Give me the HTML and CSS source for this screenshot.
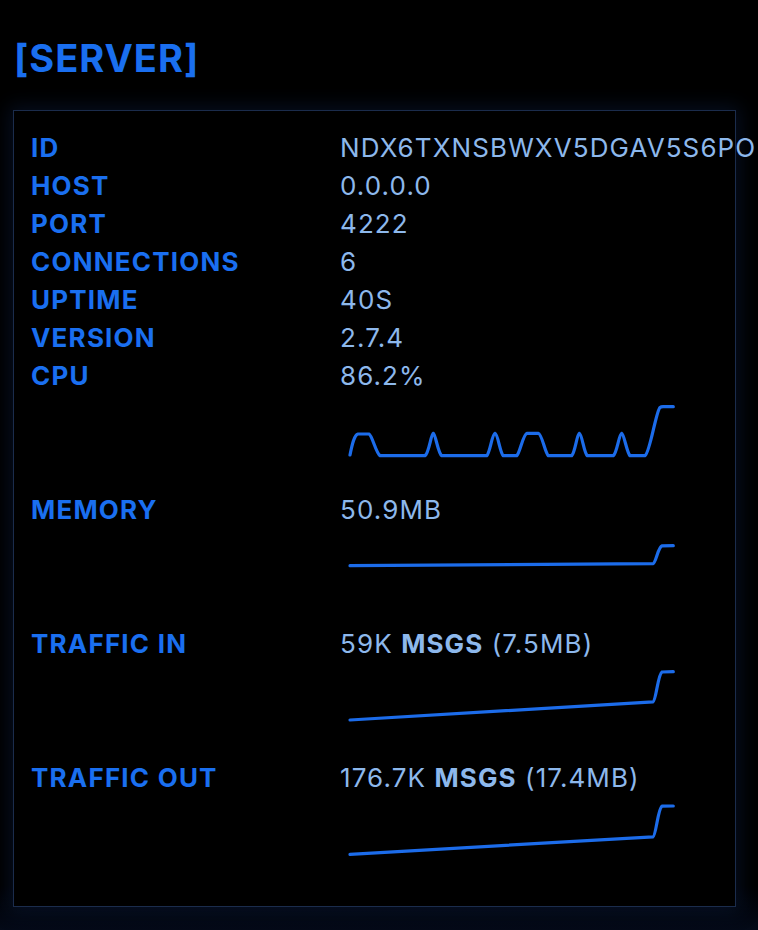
FILE: index.html
```html
<!DOCTYPE html>
<html>
<head>
<meta charset="utf-8">
<link rel="stylesheet" href="styles.css">
</head>
<body>
<div class="page">
  <h1 class="title">[SERVER]</h1>
  <section class="panel">
    <div class="row"><span class="label">ID</span><span class="value">NDX6TXNSBWXV5DGAV5S6PO</span></div>
    <div class="row"><span class="label">HOST</span><span class="value">0.0.0.0</span></div>
    <div class="row"><span class="label">PORT</span><span class="value">4222</span></div>
    <div class="row"><span class="label">CONNECTIONS</span><span class="value">6</span></div>
    <div class="row"><span class="label">UPTIME</span><span class="value">40S</span></div>
    <div class="row"><span class="label">VERSION</span><span class="value">2.7.4</span></div>
    <div class="row"><span class="label">CPU</span><span class="value">86.2%</span></div>
    <div class="chart">
      <svg width="340" height="96" viewBox="0 0 340 96">
        <path class="spark" d="M10 60 C12 50 14 40 18 39 L29 39 C32 40 36 58 40 60.7 L85 60.7 C89 58 91 39 93.3 38.3 C95.5 39 98 58 101.7 60.7 L146.7 60.7 C150 58 152 39 155 38.3 C158 39 160 58 163.3 60.7 L176.7 60.7 C180 58 183 39 187 38.3 L198.3 38.3 C202 39 205 58 208.3 60.7 L231.7 60.7 C235 58 237 39 239.3 38.3 C242 39 244 58 247.3 60.7 L273.3 60.7 C277 58 279 39 281.7 38.3 C284 39 287 58 290 60.7 L305 60.7 C310 58 316 16 320 12.5 C321 11.7 322 11.7 323 11.7 L333.3 11.7"/>
      </svg>
    </div>
    <div class="row"><span class="label">MEMORY</span><span class="value">50.9MB</span></div>
    <div class="chart">
      <svg width="340" height="96" viewBox="0 0 340 96">
        <path class="spark" d="M10 36.7 L313 34.6 C316 34 318 18 322 16.9 L333.3 16.7"/>
      </svg>
    </div>
    <div class="row"><span class="label">TRAFFIC IN</span><span class="value">59K <b>MSGS</b> (7.5MB)</span></div>
    <div class="chart">
      <svg width="340" height="96" viewBox="0 0 340 96">
        <path class="spark" d="M10 57 L313 38.9 C316 38 318 11 322 9 L333.3 8.7"/>
      </svg>
    </div>
    <div class="row"><span class="label">TRAFFIC OUT</span><span class="value">176.7K <b>MSGS</b> (17.4MB)</span></div>
    <div class="chart">
      <svg width="340" height="96" viewBox="0 0 340 96">
        <path class="spark" d="M10 57.3 L313 39.9 C316 39 318 11 322 9.2 L333.3 9"/>
      </svg>
    </div>
  </section>
</div>
</body>
</html>
```

FILE: styles.css
```css
html, body {
  margin: 0;
  padding: 0;
  background: #000;
}
body {
  font-family: Inter, "Noto Sans", sans-serif;
  width: 758px;
  height: 930px;
  overflow: hidden;
  background: linear-gradient(180deg, #000 0%, #000 95%, #040a18 100%);
}
.page {
  padding: 0 0 0 13px;
}
.title {
  margin: 0;
  padding: 36px 0 0 1px;
  height: 77px;
  box-sizing: border-box;
  font-size: 38px;
  line-height: 44px;
  font-weight: 700;
  color: #1a6ff0;
  letter-spacing: 1px;
}
.panel {
  width: 723px;
  box-sizing: border-box;
  border: 1px solid #1b2c4c;
  padding: 18px 17px 13px;
  background: #000;
  box-shadow: 0 0 18px 4px rgba(18, 40, 90, 0.35);
  margin-top: 33px;
}
.row {
  display: flex;
  height: 38px;
  line-height: 38px;
  font-size: 26px;
  white-space: nowrap;
}
.label {
  width: 309px;
  flex: none;
  font-weight: 700;
  color: #1a6ff0;
  letter-spacing: 1.2px;
}
.value {
  color: #8db8ec;
  font-weight: 400;
  letter-spacing: 1.1px;
}
.value b {
  font-weight: 700;
}
.chart {
  height: 96px;
  padding-left: 309px;
}
.chart svg {
  display: block;
}
.spark {
  fill: none;
  stroke: #1c6cea;
  stroke-width: 3.2;
  stroke-linejoin: round;
  stroke-linecap: round;
}
```
